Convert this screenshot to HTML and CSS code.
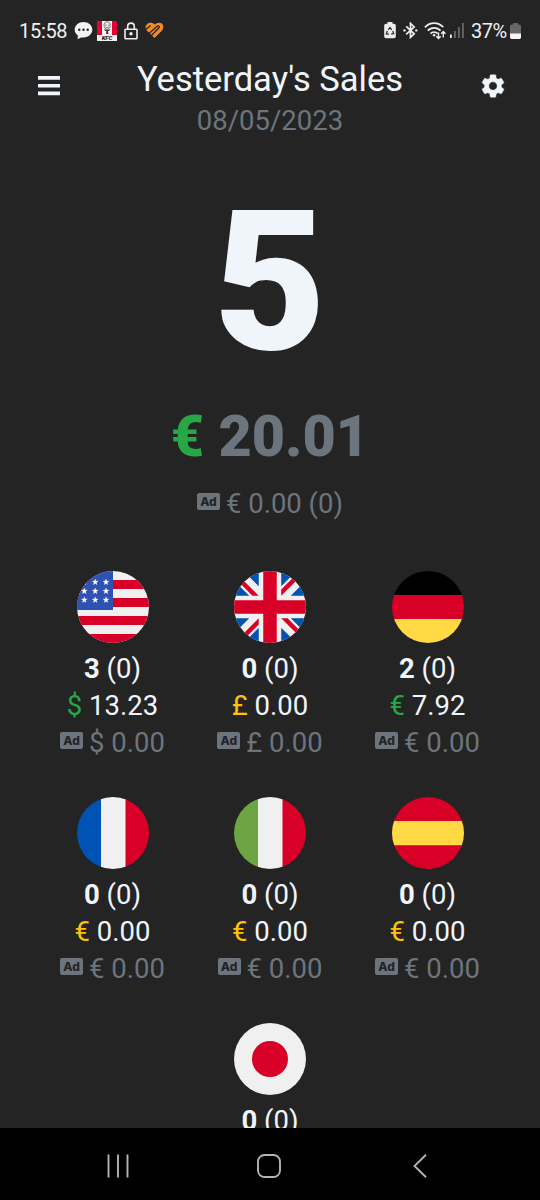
FILE: index.html
```html
<!DOCTYPE html>
<html lang="en">
<head>
<meta charset="utf-8">
<title>Yesterday's Sales</title>
<link rel="stylesheet" href="styles.css">
</head>
<body>
<div class="screen">
  <div class="status">
    <span class="clock">15:58</span>
    <svg class="i-chat" width="19" height="19" viewBox="0 0 19 19"><path fill="#f2f2f2" d="M9.5 1C14.300 1 18.300 4.300 18.300 8.700s-4 7.700-8.800 7.700H7L3.500 18.300l.4-3.800C1.900 13 .7 11 .7 8.700.7 4.300 4.700 1 9.500 1z"/><g fill="#252525"><circle cx="5.300" cy="8.800" r="1.200"/><circle cx="9.500" cy="8.800" r="1.200"/><circle cx="13.700" cy="8.800" r="1.200"/></g></svg>
    <span class="kfc">
      <svg width="20" height="14" viewBox="0 0 20 14"><path fill="#f4f1f1" d="M0 0h20v14H0z"/><path fill="#e4032e" d="M0 0h5v14H0zM15 0h5v14h-5z"/><path fill="none" stroke="#555" stroke-width=".8" d="M7.200 5.500C6.500 2 8.300.8 10.200.8c2.300 0 3.500 1.700 2.800 4.600-.3 1.700-1.300 3-2.800 3S7.700 7.200 7.200 5.500zM8.200 4.200h1.500m1.200 0h1.500M8.500 6.200q1.700.8 3.300 0"/><path fill="#333" d="M7.300 8l2.900 1 2.800-1-.8 2-1.200-.2.3 3.200h-2.200l.3-3.200-1.300.2z"/></svg>
      <b>KFC</b>
    </span>
    <svg class="i-lock" width="14" height="18" viewBox="0 0 14 18"><rect x="1" y="7.200" width="12" height="9.500" rx=".7" fill="none" stroke="#eee" stroke-width="1.600"/><path d="M3.700 7V4.400a3.300 3.300 0 0 1 6.600 0V7" fill="none" stroke="#eee" stroke-width="1.600"/><circle cx="7" cy="11.700" r="1.700" fill="#eee"/></svg>
    <svg class="i-heart" width="19" height="17" viewBox="0 0 19 17"><path fill="#f58a25" d="M9.700 2.600C7.200-.6 1.500.2.600 4.400.3 6.400 1.200 8 2.600 9.200l6.900 6.900 7.100-7.200c3.300-3.300 1.800-7.900-2-8.200-2-.2-3.600.6-4.900 1.900z"/><path fill="none" stroke="#252525" stroke-width="1.300" stroke-linecap="round" d="M.5 7.800l4.700-4M4.300 11.300l7.600-6.900c1.700-1.200 3.100.3 1.900 1.600l-6.900 7"/></svg>
    <span class="spacer"></span>
    <svg class="i-saver" width="12" height="17" viewBox="0 0 12 17"><path fill="#eee" d="M3.500 0h5v1.700H10Q11.800 1.700 11.800 3.500v11Q11.800 16.300 10 16.300H2Q.2 16.300.2 14.500v-11Q.2 1.700 2 1.700h1.500z"/><path fill="none" stroke="#252525" stroke-width="1.200" d="M4.300 7.800L6 5.500l1.700 2.300M8.700 9l1 2.500-2.500.7M5 12.200l-2.700-.3L3.300 9"/></svg>
    <svg class="i-bt" width="15" height="17" viewBox="0 0 15 17"><path fill="none" stroke="#eee" stroke-width="1.700" d="M3.200 4.300l8 7.500-3.700 3.500V1.400l3.700 3.500-8 7.500"/><circle cx="1.500" cy="8.400" r="1.200" fill="#eee"/><circle cx="13.300" cy="8.400" r="1.200" fill="#eee"/></svg>
    <svg class="i-wifi" width="23" height="18" viewBox="0 0 23 18"><g fill="none" stroke="#eee" stroke-width="1.700"><path d="M.9 5.300C6-.2 14.300-.2 19.300 5.300"/><path d="M3.700 8.700c3.600-3.900 9.300-3.900 12.900 0"/><path d="M6.500 11.700c2-2.100 5.200-2.100 7.200 0"/></g><circle cx="10.100" cy="13.300" r="1.300" fill="#eee"/><g fill="none" stroke="#eee" stroke-width="1.400"><path d="M14.500 10.500v5.800M12.300 14.200l2.200 2.300 2.200-2.300M19.300 15.500V9.700M17.100 11.800l2.200-2.300 2.200 2.300"/></g></svg>
    <svg class="i-signal" width="14" height="15" viewBox="0 0 14 15"><path fill="#eee" d="M0 11.500h1.800V15H0z"/><path fill="#686868" d="M4 8h1.800v7H4zM8 4h1.800v11H8zM12 0h1.800v15H12z"/></svg>
    <span class="pct">37%</span>
    <svg class="i-batt" width="11" height="16" viewBox="0 0 11 16"><path fill="#666" d="M3 0h5v1.500h1.500Q11 1.500 11 3v8H0V3Q0 1.500 1.500 1.500H3z"/><path fill="#f6f6f6" d="M0 10.500h11v3.700Q11 16 9.300 16H1.700Q0 16 0 14.200z"/></svg>
  </div>
  <header class="head">
    <svg class="menu" width="22" height="20" viewBox="0 0 22 20"><path fill="#f0f5fc" d="M0 0h22v3.700H0zM0 8h22v3.500H0zM0 15.500h22v3.700H0z"/></svg>
    <div class="titles">
      <h1>Yesterday's Sales</h1>
      <div class="date">08/05/2023</div>
    </div>
    <svg class="gear" width="28" height="28" viewBox="0 0 24 24"><path fill="#f0f5fc" stroke="#f0f5fc" stroke-width=".4" d="M19.140 12.940c.040-.3.060-.61.060-.940 0-.32-.020-.640-.070-.940l2.030-1.580c.18-.14.230-.41.120-.61l-1.920-3.320c-.12-.22-.37-.29-.59-.22l-2.390.96c-.5-.38-1.030-.7-1.620-.94l-.36-2.540c-.040-.24-.24-.41-.48-.41h-3.840c-.24 0-.43.17-.47.41l-.36 2.540c-.59.24-1.130.57-1.620.94l-2.390-.96c-.22-.080-.47 0-.59.220L2.740 8.870c-.12.210-.080.470.120.610l2.030 1.580c-.050.3-.090.630-.090.940s.020.640.070.940l-2.030 1.580c-.18.14-.23.410-.12.610l1.920 3.320c.12.220.37.290.59.220l2.390-.960c.5.380 1.030.7 1.620.940l.360 2.540c.050.24.24.41.48.41h3.840c.24 0 .44-.17.47-.41l.36-2.540c.59-.24 1.130-.56 1.620-.94l2.390.96c.22.080.47 0 .59-.22l1.920-3.320c.12-.22.070-.47-.12-.61l-2.010-1.580zM12 15.600c-1.980 0-3.600-1.620-3.600-3.600s1.620-3.600 3.600-3.600 3.600 1.620 3.600 3.600-1.620 3.600-3.600 3.600z"/></svg>
  </header>
  <div class="count">5</div>
  <div class="total"><span class="green">€</span> 20.01</div>
  <div class="ads main-ads"><span class="ad">Ad</span>€ 0.00 (0)</div>

  <div class="grid">
    <div class="cell">
      <svg class="flag" viewBox="0 0 72 72"><defs><path id="star" d="M0-3l.75 2.100 2.200.050-1.750 1.350.62 2.150L0 1.400l-1.820 1.250.62-2.150-1.750-1.350 2.200-.050z"/></defs><path fill="#f0f0f0" d="M0 0h72v72H0z"/><path fill="#d80027" d="M0 9h72v9H0zM0 27h72v9H0zM0 45h72v9H0zM0 63h72v9H0z"/><path fill="#2e52b2" d="M0 0h36v39H0z"/><g fill="#fff" stroke="#fff" stroke-width=".3"><use href="#star" x="7.300" y="11"/><use href="#star" x="18.200" y="11"/><use href="#star" x="29" y="11"/><use href="#star" x="7.300" y="20"/><use href="#star" x="18.200" y="20"/><use href="#star" x="29" y="20"/><use href="#star" x="7.300" y="28.800"/><use href="#star" x="18.200" y="28.800"/><use href="#star" x="29" y="28.800"/></g></svg>
      <div><b>3</b> (0)</div>
      <div><span class="green">$</span> 13.23</div>
      <div class="ads"><span class="ad">Ad</span>$ 0.00</div>
    </div>
    <div class="cell">
      <svg class="flag" viewBox="0 0 512 512"><path fill="#f0f0f0" d="M0 0h512v512H0z"/><path fill="#0052b4" d="M336 0v108L444 0zm176 68L404 176h108zM0 176h108L0 68zM68 0l108 108V0zm108 512V404L68 512zM0 444l108-108H0zm512-108H404l108 108zm-68 176L336 404v108z"/><path fill="#d80027" d="M0 0v45l131 131h45zM208 0v208H0v96h208v208h96V304h208v-96H304V0zM467 0L336 131v45L512 0zM176 336L0 512h45l131-131zM336 336l176 176v-45L381 336z"/></svg>
      <div><b>0</b> (0)</div>
      <div><span class="yellow">£</span> 0.00</div>
      <div class="ads"><span class="ad">Ad</span>£ 0.00</div>
    </div>
    <div class="cell">
      <svg class="flag" viewBox="0 0 72 72"><path d="M0 0h72v24H0z"/><path fill="#d80027" d="M0 24h72v24H0z"/><path fill="#ffda44" d="M0 48h72v24H0z"/></svg>
      <div><b>2</b> (0)</div>
      <div><span class="green">€</span> 7.92</div>
      <div class="ads"><span class="ad">Ad</span>€ 0.00</div>
    </div>
    <div class="cell">
      <svg class="flag" viewBox="0 0 72 72"><path fill="#0052b4" d="M0 0h24v72H0z"/><path fill="#f0f0f0" d="M24 0h25v72H24z"/><path fill="#d80027" d="M48.500 0H72v72H48.500z"/></svg>
      <div><b>0</b> (0)</div>
      <div><span class="yellow">€</span> 0.00</div>
      <div class="ads"><span class="ad">Ad</span>€ 0.00</div>
    </div>
    <div class="cell">
      <svg class="flag" viewBox="0 0 72 72"><path fill="#6da544" d="M0 0h24v72H0z"/><path fill="#f0f0f0" d="M24 0h25v72H24z"/><path fill="#d80027" d="M48.500 0H72v72H48.500z"/></svg>
      <div><b>0</b> (0)</div>
      <div><span class="yellow">€</span> 0.00</div>
      <div class="ads"><span class="ad">Ad</span>€ 0.00</div>
    </div>
    <div class="cell">
      <svg class="flag" viewBox="0 0 72 72"><path fill="#d80027" d="M0 0h72v72H0z"/><path fill="#ffda44" d="M0 24h72v24.300H0z"/></svg>
      <div><b>0</b> (0)</div>
      <div><span class="yellow">€</span> 0.00</div>
      <div class="ads"><span class="ad">Ad</span>€ 0.00</div>
    </div>
    <div class="cell last">
      <svg class="flag" viewBox="0 0 72 72"><path fill="#f0f0f0" d="M0 0h72v72H0z"/><circle cx="36" cy="36" r="18" fill="#d80027"/></svg>
      <div><b>0</b> (0)</div>
    </div>
  </div>
</div>
<nav class="nav">
  <svg width="22" height="24" viewBox="0 0 22 24"><path fill="none" stroke="#b4b4b4" stroke-width="1.900" d="M1.500.5v23M11 .5v23M20.500.5v23"/></svg>
  <svg width="24" height="24" viewBox="0 0 24 24"><rect x="1" y="1" width="22" height="22" rx="6.500" fill="none" stroke="#b4b4b4" stroke-width="1.900"/></svg>
  <svg width="14" height="24" viewBox="0 0 14 24"><path fill="none" stroke="#b4b4b4" stroke-width="1.900" d="M13 .7L1.500 12 13 23.300"/></svg>
</nav>
</body>
</html>
```

FILE: styles.css
```css
* { box-sizing: border-box; }
body {
  margin: 0;
  width: 540px;
  height: 1200px;
  overflow: hidden;
  background: #000;
  font-family: Roboto, "Liberation Sans", sans-serif;
  color: #f0f5fc;
}
svg { display: block; flex: none; }
.screen {
  height: 1128px;
  overflow: hidden;
  background: #242424;
  text-align: center;
  font-size: 27.5px;
  line-height: 37px;
}
.status {
  display: flex;
  align-items: center;
  height: 61px;
  padding: 0 19px 0 19px;
  font-size: 20px;
  line-height: 24px;
  color: #f0f0f0;
}
.clock { width: 55px; text-align: left; letter-spacing: -0.3px; }
.i-chat { margin-right: 4px; }
.kfc {
  display: flex;
  flex-direction: column;
  width: 20px;
  height: 20px;
  background: #f4f1f1;
  margin-right: 7px;
}
.kfc b {
  height: 6px;
  color: #222;
  font-size: 6px;
  font-style: italic;
  font-weight: 900;
  line-height: 5px;
}
.i-lock { margin-right: 7px; }
.spacer { flex: 1; }
.i-saver { margin-right: 7px; }
.i-bt { margin-right: 6px; }
.i-wifi { margin-right: 3px; }
.i-signal { margin-right: 7px; }
.pct { width: 39px; text-align: left; letter-spacing: -0.5px; white-space: nowrap; }
.head {
  display: grid;
  grid-template-columns: 60px 1fr 60px;
  align-items: start;
  padding: 0 33px 0 38px;
  height: 77px;
}
.menu { margin-top: 15px; }
.titles { margin: -2px -60px 0 -65px; }
.gear { margin-top: 11px; justify-self: end; }
h1 {
  margin: 0;
  font-size: 34.5px;
  font-weight: 400;
  line-height: 40px;
  height: 42px;
}
.date { color: #6c757d; margin-top: 1px; }
.count {
  height: 240px;
  margin-top: 25px;
  margin-bottom: -3px;
  font-size: 194px;
  font-weight: 900;
  line-height: 240px;
}
.total {
  height: 74px;
  font-size: 57.5px;
  font-weight: 900;
  line-height: 74px;
  color: #6c757d;
}
.green { color: #28a745; }
.yellow { color: #ffc107; }
.ads {
  display: flex;
  justify-content: center;
  color: #6c757d;
}
.main-ads { margin-top: 11px; }
.ad {
  width: 23px;
  height: 17px;
  margin: 8px 6px 0 0;
  border-radius: 2px;
  background: #6c757d;
  color: #242424;
  font: 800 12px/17px Inter, sans-serif;
}
.grid {
  display: grid;
  grid-template-columns: repeat(3, 157.5px);
  grid-auto-rows: 190px;
  row-gap: 36px;
  justify-content: center;
  margin-top: 49px;
}
.last { grid-column: 2; }
.flag {
  width: 72px;
  height: 72px;
  margin: 0 auto 7px;
  border-radius: 50%;
}
.nav {
  display: flex;
  justify-content: space-between;
  align-items: center;
  height: 72px;
  padding: 3px 113px 0 107px;
}
.nav svg:nth-child(2) { margin-right: 4px; }
```
